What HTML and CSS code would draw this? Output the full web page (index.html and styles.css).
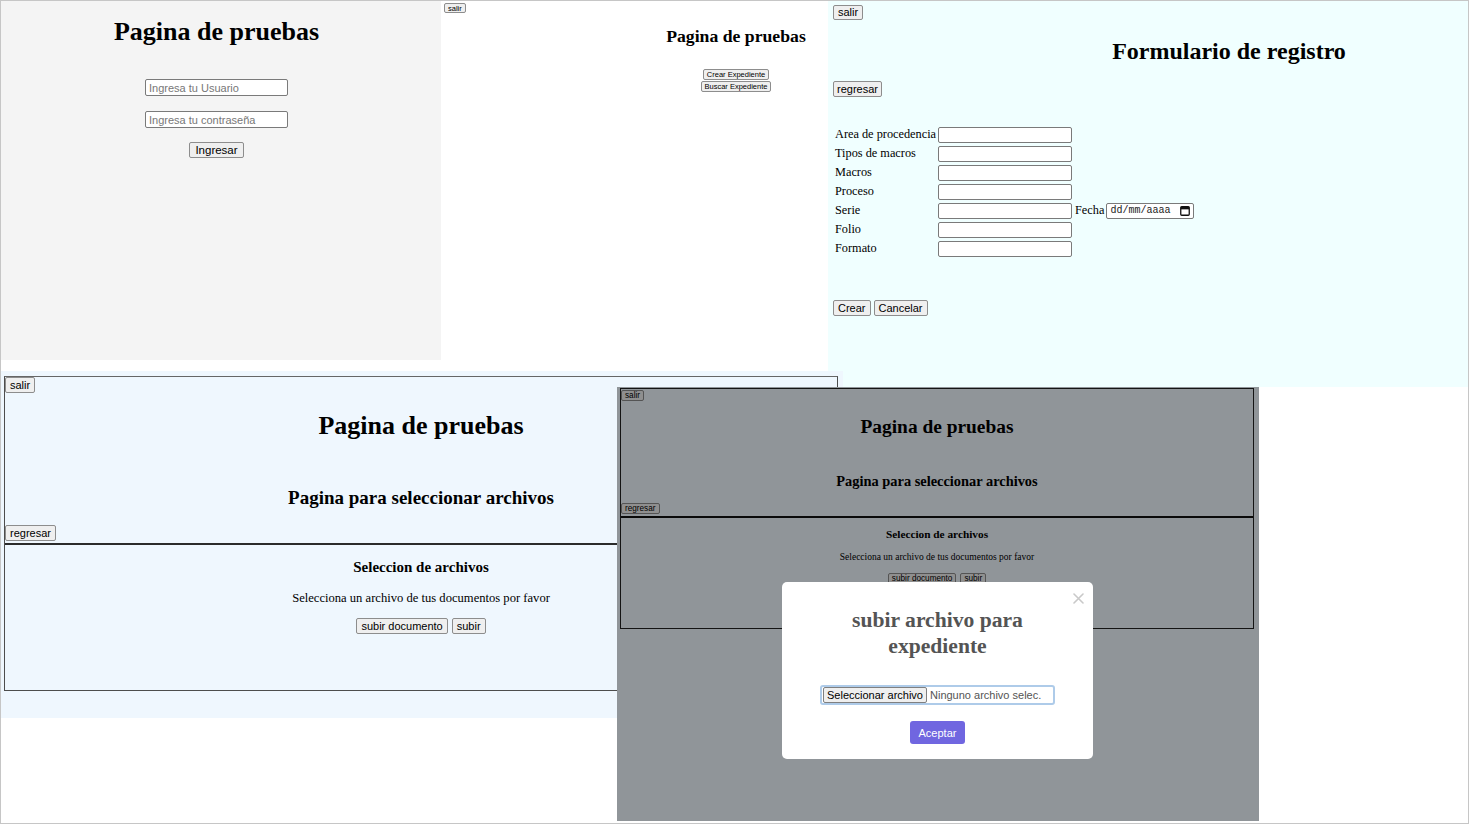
FILE: index.html
```html
<!DOCTYPE html>
<html lang="es">
<head>
<meta charset="utf-8">
<title>Pagina de pruebas</title>
<link rel="stylesheet" href="styles.css">
</head>
<body>
<div class="canvas">

  <!-- 1. Login -->
  <section class="win win-login">
    <div class="login-col">
      <h1 class="t-login">Pagina de pruebas</h1>
      <input class="txt login-input user" type="text" placeholder="Ingresa tu Usuario">
      <input class="txt login-input pass" type="password" placeholder="Ingresa tu contraseña">
      <button class="btn btn-ingresar">Ingresar</button>
    </div>
  </section>

  <!-- 2. Menu -->
  <section class="win win-menu">
    <button class="btn btn-xs menu-salir">salir</button>
    <div class="menu-col">
      <h1 class="t-menu">Pagina de pruebas</h1>
      <button class="btn btn-xs menu-crear">Crear Expediente</button>
      <button class="btn btn-xs menu-buscar">Buscar Expediente</button>
    </div>
  </section>

  <!-- 3. Formulario -->
  <section class="win win-form">
    <button class="btn form-salir">salir</button>
    <div class="form-head">
      <h1 class="t-form">Formulario de registro</h1>
    </div>
    <button class="btn form-regresar">regresar</button>
    <div class="form-grid">
      <label class="lbl">Area de procedencia</label><input class="txt fld" type="text">
      <label class="lbl">Tipos de macros</label><input class="txt fld" type="text">
      <label class="lbl">Macros</label><input class="txt fld" type="text">
      <label class="lbl">Proceso</label><input class="txt fld" type="text">
      <label class="lbl">Serie</label><input class="txt fld" type="text">
      <label class="lbl lbl-fecha">Fecha</label>
      <div class="date">
        <span class="date-text">dd/mm/aaaa</span>
        <svg class="cal" width="10" height="10" viewBox="0 0 10 10"><rect x="0.75" y="0.75" width="8.5" height="8.5" rx="1" fill="none" stroke="#111" stroke-width="1.3"/><rect x="0.75" y="0.75" width="8.5" height="2.6" fill="#111"/></svg>
      </div>
      <label class="lbl">Folio</label><input class="txt fld" type="text">
      <label class="lbl">Formato</label><input class="txt fld" type="text">
    </div>
    <div class="form-actions">
      <button class="btn">Crear</button>
      <button class="btn">Cancelar</button>
    </div>
  </section>

  <!-- 4. Seleccion de archivos -->
  <section class="win win-sel">
    <div class="sel-box">
      <button class="btn sel-btn">salir</button>
      <h1 class="t-sel">Pagina de pruebas</h1>
      <h2 class="t-sel2">Pagina para seleccionar archivos</h2>
      <button class="btn sel-btn sel-regresar">regresar</button>
      <div class="sel-rule"></div>
      <div class="sel-body">
        <h3 class="t-sel3">Seleccion de archivos</h3>
        <p class="sel-p">Selecciona un archivo de tus documentos por favor</p>
        <div class="sel-actions">
          <button class="btn sel-btn">subir documento</button>
          <button class="btn sel-btn">subir</button>
        </div>
      </div>
    </div>
  </section>

  <!-- 5. Seleccion de archivos con modal -->
  <section class="win win-modal">
    <div class="mini-box">
      <button class="btn mini-btn">salir</button>
      <h1 class="t-mini">Pagina de pruebas</h1>
      <h2 class="t-mini2">Pagina para seleccionar archivos</h2>
      <button class="btn mini-btn mini-regresar">regresar</button>
      <div class="mini-rule"></div>
      <div class="mini-body">
        <h3 class="t-mini3">Seleccion de archivos</h3>
        <p class="mini-p">Selecciona un archivo de tus documentos por favor</p>
        <div class="mini-actions">
          <button class="btn mini-btn">subir documento</button>
          <button class="btn mini-btn">subir</button>
        </div>
      </div>
    </div>
    <div class="backdrop"></div>
    <div class="popup">
      <svg class="popup-close" width="11" height="11" viewBox="0 0 11 11"><path d="M1 1 L10 10 M10 1 L1 10" stroke="#c9c9c9" stroke-width="1.6" stroke-linecap="round"/></svg>
      <h2 class="popup-title">subir archivo para expediente</h2>
      <div class="file">
        <span class="file-btn">Seleccionar archivo</span>
        <span class="file-name">Ninguno archivo selec.</span>
      </div>
      <button class="popup-ok">Aceptar</button>
    </div>
  </section>

</div>
</body>
</html>
```

FILE: styles.css
```css
* { box-sizing: border-box; }

html, body {
  margin: 0;
  padding: 0;
  background: #fff;
}

body {
  font-family: "Liberation Serif", "Times New Roman", serif;
  color: #000;
}

.canvas {
  position: relative;
  width: 1469px;
  height: 824px;
  overflow: hidden;
  background: #fff;
}

.canvas::after {
  content: "";
  position: absolute;
  inset: 0;
  border: 1px solid #c6c6c6;
  pointer-events: none;
  z-index: 20;
}

.win {
  position: absolute;
  overflow: hidden;
}

h1, h2, h3, p { margin: 0; font-weight: bold; }

.btn {
  display: inline-block;
  font-family: "Liberation Sans", Arial, sans-serif;
  font-size: 11px;
  line-height: 13px;
  height: 16px;
  padding: 0 4px;
  margin: 0;
  color: #000;
  background: #efefef;
  border: 1px solid #8d8d8d;
  border-radius: 2px;
}

.txt {
  display: block;
  margin: 0;
  font-family: "Liberation Sans", Arial, sans-serif;
  font-size: 11px;
  padding: 0 3px;
  background: #fff;
  border: 1px solid #7a7a7a;
  border-radius: 2px;
}

.txt::placeholder { color: #777; }

/* 1. Login */
.win-login {
  left: 0;
  top: 0;
  width: 441px;
  height: 360px;
  background: #f4f4f4;
}

.login-col {
  width: 433px;
  display: flex;
  flex-direction: column;
  align-items: center;
}

.t-login {
  font-size: 26px;
  line-height: 30px;
  margin-top: 17px;
}

.login-input {
  width: 143px;
  height: 17px;
}

.login-input.user { margin-top: 32px; }
.login-input.pass { margin-top: 15px; }

.btn-ingresar {
  margin-top: 14px;
  padding: 0 5px;
  font-size: 11.5px;
}

/* 2. Menu */
.win-menu {
  left: 441px;
  top: 0;
  width: 387px;
  height: 371px;
  background: #fff;
}

.btn-xs {
  font-size: 7.5px;
  line-height: 9px;
  height: 11px;
  padding: 0 3px;
}

.menu-salir {
  display: block;
  margin: 3px 0 0 3px;
  height: 10px;
}

.menu-col {
  width: 590px;
  display: flex;
  flex-direction: column;
  align-items: center;
}

.t-menu {
  font-size: 17.7px;
  line-height: 22px;
  margin-top: 12px;
}

.menu-crear { margin-top: 22px; }
.menu-buscar { margin-top: 1px; }

/* 3. Formulario */
.win-form {
  left: 828px;
  top: 0;
  width: 641px;
  height: 387px;
  background: #f0ffff;
}

.form-salir {
  display: block;
  margin: 5px 0 0 5px;
  height: 15px;
}

.form-head {
  width: 802px;
  text-align: center;
}

.t-form {
  font-size: 24px;
  line-height: 28px;
  margin-top: 17px;
}

.form-regresar {
  display: block;
  margin: 16px 0 0 5px;
  padding: 0 3px;
}

.form-grid {
  display: grid;
  grid-template-columns: 103px 134px auto auto;
  grid-auto-rows: 19px;
  align-items: center;
  justify-content: start;
  margin: 28px 0 0 7px;
}

.lbl {
  grid-column: 1;
  font-size: 12.3px;
  line-height: 15px;
  white-space: nowrap;
}

.lbl-fecha {
  grid-column: 3;
  margin-left: 3px;
}

.fld {
  width: 134px;
  height: 16px;
}

.date {
  display: flex;
  align-items: center;
  width: 88px;
  height: 16px;
  margin-left: 2px;
  padding: 0 3px 0 3px;
  background: #fff;
  border: 1px solid #7a7a7a;
  border-radius: 2px;
}

.date-text {
  font-family: "Liberation Mono", "Courier New", monospace;
  font-size: 10px;
  color: #222;
}

.cal { margin-left: auto; }

.form-actions {
  display: flex;
  gap: 3px;
  margin: 42px 0 0 5px;
}

/* 4. Seleccion */
.win-sel {
  left: 0;
  top: 371px;
  width: 843px;
  height: 347px;
  background: #eff7fe;
}

.sel-box {
  display: flex;
  flex-direction: column;
  align-items: center;
  width: 834px;
  height: 315px;
  margin: 5px 0 0 4px;
  border: 1px solid #4d4d4d;
  border-top: 1px solid #666;
}

.sel-btn { align-self: flex-start; }

.t-sel {
  font-size: 26px;
  line-height: 30px;
  margin-top: 18px;
}

.t-sel2 {
  font-size: 19px;
  line-height: 22px;
  margin-top: 46px;
}

.sel-regresar { margin-top: 16px; }

.sel-rule {
  align-self: stretch;
  height: 2px;
  margin-top: 2px;
  background: #2b2b2b;
}

.sel-body {
  display: flex;
  flex-direction: column;
  align-items: center;
}

.t-sel3 {
  font-size: 15px;
  line-height: 18px;
  margin-top: 13px;
}

.sel-p {
  font-weight: normal;
  font-size: 12.6px;
  line-height: 16px;
  margin-top: 14px;
}

.sel-actions {
  display: flex;
  gap: 4px;
  margin-top: 12px;
}

.sel-actions .sel-btn { align-self: auto; }

/* 5. Modal */
.win-modal {
  left: 617px;
  top: 387px;
  width: 642px;
  height: 434px;
  background: #f0f8ff;
}

.mini-box {
  display: flex;
  flex-direction: column;
  align-items: center;
  width: 634px;
  height: 241px;
  margin: 1px 0 0 3px;
  border: 1px solid #222;
}

.mini-btn {
  align-self: flex-start;
  font-size: 8.2px;
  line-height: 9px;
  height: 11px;
  padding: 0 3px;
}

.mini-box > .mini-btn:first-child { margin-top: 1px; }

.t-mini {
  font-size: 19.4px;
  line-height: 22px;
  margin-top: 15px;
}

.t-mini2 {
  font-size: 14.4px;
  line-height: 17px;
  margin-top: 35px;
}

.mini-regresar { margin-top: 13px; }

.mini-rule {
  align-self: stretch;
  height: 2px;
  margin-top: 2px;
  background: #111;
}

.mini-body {
  display: flex;
  flex-direction: column;
  align-items: center;
}

.t-mini3 {
  font-size: 11.3px;
  line-height: 13px;
  margin-top: 10px;
}

.mini-p {
  font-weight: normal;
  font-size: 9.5px;
  line-height: 12px;
  margin-top: 10px;
}

.mini-actions {
  display: flex;
  gap: 4px;
  margin-top: 10px;
}

.mini-actions .mini-btn { align-self: auto; }

.backdrop {
  position: absolute;
  inset: 0;
  background: rgba(0, 0, 0, 0.4);
}

.popup {
  position: absolute;
  left: 165px;
  top: 195px;
  width: 311px;
  height: 177px;
  display: flex;
  flex-direction: column;
  align-items: center;
  padding: 25px 40px 15px;
  background: #fff;
  border-radius: 5px;
}

.popup-close {
  position: absolute;
  left: 291px;
  top: 11px;
}

.popup-title {
  font-size: 21.6px;
  line-height: 26px;
  color: #545454;
  text-align: center;
}

.file {
  display: flex;
  align-items: center;
  width: 235px;
  height: 20px;
  margin-top: 26px;
  padding: 0 1px;
  border: 2px solid #aecbe9;
  border-radius: 3px;
  background: #fff;
  font-family: "Liberation Sans", Arial, sans-serif;
  font-size: 11px;
}

.file-btn {
  height: 16px;
  line-height: 14px;
  padding: 0 3px;
  background: #efefef;
  border: 1px solid #808080;
  border-radius: 2px;
  color: #000;
}

.file-name {
  margin-left: 3px;
  color: #545454;
  white-space: nowrap;
}

.popup-ok {
  margin-top: 16px;
  height: 23px;
  padding: 0 9px;
  font-family: "Liberation Sans", Arial, sans-serif;
  font-size: 11px;
  color: #fff;
  background: #7066e0;
  border: 0;
  border-radius: 3px;
}
```
